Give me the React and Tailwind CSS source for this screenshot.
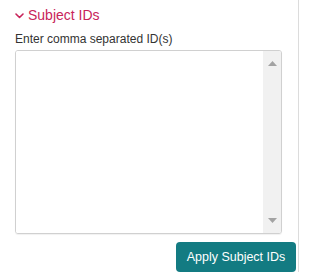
import React from 'react';

// Filter-Panel "Subject IDs": Titel mit Chevron, Textfeld, Apply-Button.

function Chevron() {
    return (
        <svg width="9" height="6" viewBox="0 0 9 6" className="mr-[4px] mt-[2px]" aria-hidden="true">
            <path d="M1 1 L4.5 4.5 L8 1" fill="none" stroke="#c8245a" strokeWidth="1.6" strokeLinecap="round" strokeLinejoin="round" />
        </svg>
    );
}

function FakeScrollbar() {
    return (
        <div className="flex w-[18px] flex-col items-center justify-between bg-[#f1f1f1] py-[10px]">
            <svg width="9" height="5" viewBox="0 0 9 5" aria-hidden="true">
                <path d="M0 5 L4.5 0 L9 5 Z" fill="#a3a3a3" />
            </svg>
            <svg width="9" height="5" viewBox="0 0 9 5" aria-hidden="true">
                <path d="M0 0 L4.5 5 L9 0 Z" fill="#a3a3a3" />
            </svg>
        </div>
    );
}

export default function App() {
    return (
        <div className="h-[272px] w-[299px] border-r border-[#dcdcdc] bg-white font-['Liberation_Sans',Arial,sans-serif]">
            <div className="flex items-center pl-[15px] pt-[5px] text-[14px] leading-[20px] text-[#c8245a]">
                <Chevron />
                <span>Subject IDs</span>
            </div>
            <label className="mt-[6px] block pl-[15px] text-[12px] leading-[16px] text-[#333]">
                Enter comma separated ID(s)
            </label>
            <div className="ml-[15px] mt-[3px] flex h-[184px] w-[267px] overflow-hidden rounded-[3px] border border-[#d0d0d0] shadow-[0_1px_1px_rgba(0,0,0,0.06)]">
                <textarea className="flex-1 resize-none bg-white outline-none" />
                <FakeScrollbar />
            </div>
            <div className="mt-[8px] flex justify-end pr-[2px]">
                <button className="h-[30px] w-[120px] rounded-[4px] bg-[#137b82] text-[12.5px] text-white">
                    Apply Subject IDs
                </button>
            </div>
        </div>
    );
}
